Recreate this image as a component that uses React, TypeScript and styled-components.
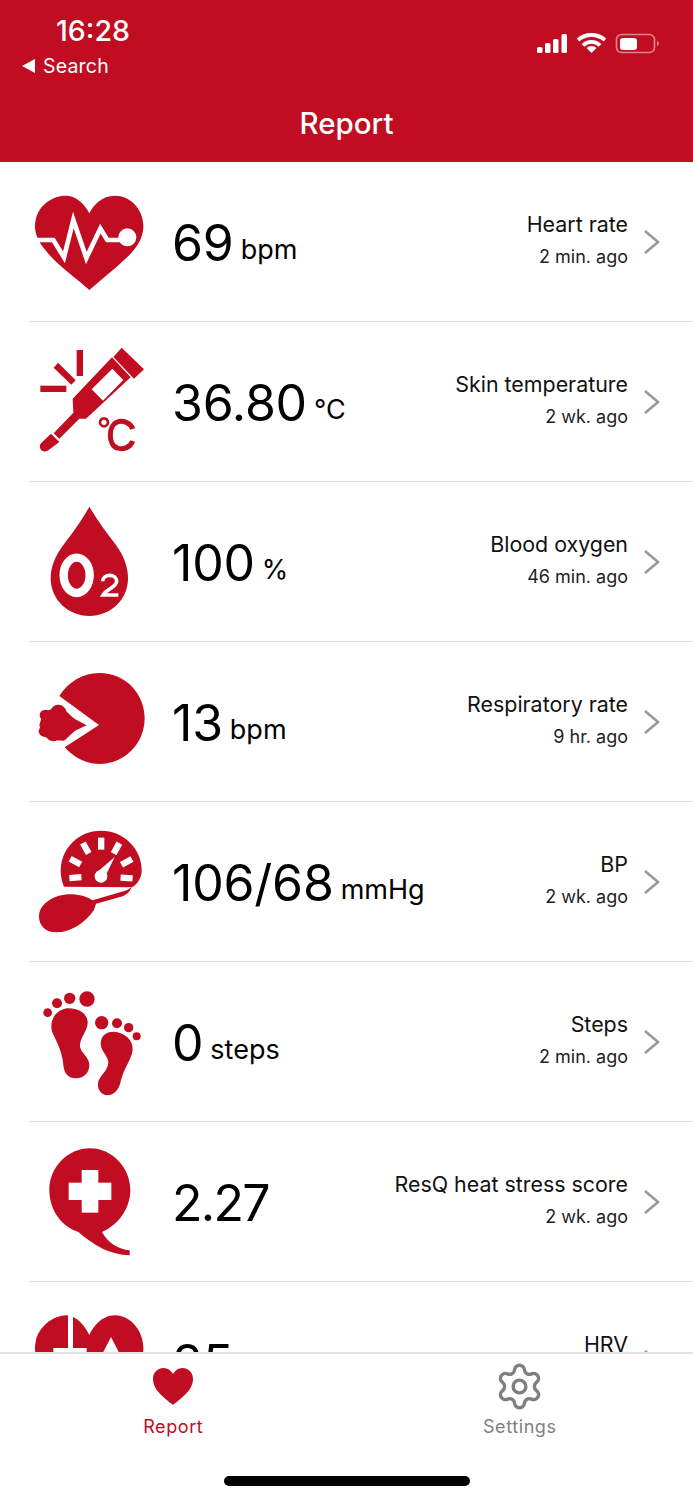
import * as React from 'react';
import styled, { createGlobalStyle } from 'styled-components';
import { Settings } from 'lucide-react';

const RED = '#C00D22';

const GlobalStyle = createGlobalStyle`
	html, body {
		margin: 0;
		padding: 0;
		background: #FFFFFF;
	}
	body {
		font-family: Inter, "Liberation Sans", sans-serif;
	}
`;

const Page = styled.div`
	width: 693px;
	height: 1500px;
	display: flex;
	flex-direction: column;
	overflow: hidden;
	background: #FFFFFF;
`;

const Header = styled.header`
	height: 162px;
	flex: none;
	box-sizing: border-box;
	padding: 15px 32px 0 22px;
	display: flex;
	flex-direction: column;
	background: ${RED};
	color: #FFFFFF;
`;

const StatusBar = styled.div`
	display: flex;
	justify-content: space-between;
	align-items: flex-start;
`;

const StatusLeft = styled.div`
	display: flex;
	flex-direction: column;
`;

const Time = styled.div`
	margin-left: 34px;
	font-size: 28.5px;
	line-height: 32px;
	font-weight: 500;
`;

const BackLink = styled.div`
	margin-top: 8px;
	display: flex;
	align-items: center;
	gap: 8px;
	font-size: 19.5px;
	line-height: 22px;
	letter-spacing: 0.2px;
`;

const StatusIcons = styled.svg`
	margin-top: 17px;
	display: block;
`;

const Title = styled.h1`
	margin: 28px 0 0 10px;
	text-align: center;
	font-size: 29.5px;
	line-height: 36px;
	font-weight: 500;
`;

const List = styled.main`
	flex: 1;
	min-height: 0;
	overflow: hidden;
`;

const Row = styled.div`
	height: 160px;
	box-sizing: border-box;
	margin-left: 29px;
	padding-right: 32px;
	display: flex;
	align-items: center;
	border-bottom: 1px solid #DDDDDD;
`;

const IconBox = styled.svg`
	flex: none;
	display: block;
	width: 120px;
	height: 130px;
	fill: ${RED};
`;

const Reading = styled.div`
	margin-left: 23px;
	padding-top: 2px;
	flex: 1;
	color: #000000;
	white-space: nowrap;
`;

const Value = styled.span<{ $tight?: boolean }>`
	font-size: 50px;
	line-height: 60px;
	letter-spacing: ${props => props.$tight ? '-1.7px' : '-0.2px'};
`;

const Unit = styled.span`
	margin-left: 7px;
	font-size: 27px;
	line-height: 32px;
	vertical-align: 2px;
`;

const Meta = styled.div`
	display: flex;
	flex-direction: column;
	align-items: flex-end;
	margin-right: 15px;
`;

const Label = styled.div`
	font-size: 21.4px;
	line-height: 30px;
	color: #111111;
`;

const Ago = styled.div`
	font-size: 18px;
	line-height: 36px;
	color: #222222;
`;

const Chevron = styled.svg`
	flex: none;
	display: block;
`;

const TabBar = styled.nav`
	height: 148px;
	flex: none;
	box-sizing: border-box;
	border-top: 2px solid #E2E2E2;
	display: flex;
	flex-direction: column;
	background: #FFFFFF;
`;

const Tabs = styled.div`
	display: flex;
`;

const Tab = styled.div<{ $active?: boolean }>`
	flex: 1;
	height: 122px;
	padding-top: 5px;
	box-sizing: border-box;
	display: flex;
	flex-direction: column;
	align-items: center;
	font-size: 18px;
	line-height: 22px;
	letter-spacing: 0.6px;
	font-weight: 400;
	color: ${props => props.$active ? RED : '#808080'};
`;

const TabIcon = styled.div`
	height: 54px;
	margin-bottom: 3px;
	display: flex;
	align-items: center;
	justify-content: center;
`;

const HomeIndicator = styled.div`
	width: 246px;
	height: 10px;
	margin: 0 auto;
	border-radius: 5px;
	background: #000000;
`;

const HeartIcon = () => (
	<IconBox viewBox="27 -9 360 390">
		<path d="M208 330 C170 295 110 255 76 210 C50 178 40 150 47 120 C55 75 100 45 140 47 C172 49 196 75 208 100 C220 75 245 47 285 47 C330 47 368 85 370 135 C372 175 345 210 318 235 C285 268 245 297 208 330 Z" />
		<path d="M48 180 H100 L132 232 L160 120 L199 234 L241 146 L262 180 H322" fill="none" stroke="#FFF" strokeWidth="14" />
		<circle cx="322" cy="172" r="27" fill="#FFF" />
	</IconBox>
);

const ThermometerIcon = () => (
	<IconBox viewBox="27 471 360 390">
		<rect x="61" y="617" width="78" height="19" />
		<rect x="170" y="510" width="19" height="78" />
		<path d="M101 563 L114 548 L167 601 L154 614 Z" />
		<path d="M276 532 L332 592 L198 716 L178 716 L118 776 L101 760 L160 698 L158 656 Z" />
		<path d="M277 566 L310 600 L249 662 L215 628 Z" fill="#FFF" />
		<path d="M305 503 L372 568 L342 596 L280 531 Z" />
		<path d="M93 761 L118 786 L83 812 C72 818 62 812 60 803 C58 795 62 790 66 787 Z" />
		<circle cx="252" cy="727" r="12" fill="none" stroke={RED} strokeWidth="8" />
		<path d="M338 747 C332 728 308 720 292 726 C264 736 264 796 292 804 C310 810 332 802 338 783" fill="none" stroke={RED} strokeWidth="15" />
	</IconBox>
);

const DropIcon = () => (
	<IconBox viewBox="27 21 360 390">
		<path d="M208 50 C185 92 160 125 130 165 C105 198 92 232 92 265 C92 330 145 378 208 378 C272 378 324 330 324 265 C324 232 312 198 288 165 C258 125 232 92 208 50 Z" />
		<ellipse cx="170" cy="256" rx="39" ry="53" fill="none" stroke="#FFF" strokeWidth="25" />
		<path d="M248 274 C248 250 290 250 290 274 C290 292 258 298 249 315 H295" fill="none" stroke="#FFF" strokeWidth="11" />
	</IconBox>
);

const BreathIcon = () => (
	<IconBox viewBox="27 501 360 390">
		<path d="M118 618 C145 575 190 549 238 549 C315 549 374 610 374 685 C374 762 312 822 238 822 C200 822 162 804 134 772 L237 705 Z" />
		<circle cx="76" cy="676" r="17" />
		<circle cx="115" cy="668" r="24" />
		<circle cx="72" cy="724" r="16" />
		<circle cx="100" cy="733" r="21" />
		<path d="M70 665 L118 650 C135 655 145 672 166 688 L200 706 L165 722 C155 730 146 740 132 752 L90 750 L66 735 L58 705 Z" />
	</IconBox>
);

// [angle, radius] of the gauge's tick marks
const gaugeTicks: [number, number][] = [
	[0, 97], [29, 95], [-29, 95], [61, 88], [-61, 88], [94, 77], [-94, 77],
];

const GaugeIcon = () => (
	<IconBox viewBox="27 6 360 390">
		<path d="M132 215 C125 198 122 182 122 167 C122 100 176 47 243 47 C310 47 365 100 365 167 C365 188 352 208 335 217 Z" />
		<path d="M335 216 C328 234 316 242 300 246 L228 266 L222 285 C195 325 150 352 110 352 C75 352 57 330 57 305 C57 265 105 238 150 238 C178 238 200 245 218 256 L300 232 C316 228 326 224 335 216 Z" />
		<g fill="#FFF">
			{gaugeTicks.map(([angle, r]) => (
				<rect key={angle} x="234" y={183 - r - 18} width="19" height="36" transform={`rotate(${angle} 243 183)`} />
			))}
			<circle cx="243" cy="184" r="19" />
			<path d="M231 172 L284 126 L255 186 Z" />
		</g>
	</IconBox>
);

const FeetIcon = () => (
	<IconBox viewBox="27 486 360 390">
		<circle cx="201" cy="552" r="23" />
		<circle cx="149" cy="550" r="17" />
		<circle cx="111" cy="565" r="15" />
		<circle cx="83" cy="593" r="13" />
		<path d="M140 580 C175 578 204 595 203 625 C202 650 178 670 180 695 C183 715 208 725 208 750 C208 775 190 790 168 790 C145 790 132 775 130 750 C128 715 110 680 98 655 C88 630 95 590 140 580 Z" />
		<circle cx="245" cy="623" r="20" />
		<circle cx="291" cy="625" r="15" />
		<circle cx="326" cy="638" r="14" />
		<circle cx="350" cy="664" r="12" />
		<path d="M280 650 C315 652 340 675 338 705 C336 730 312 760 303 795 C298 825 280 842 262 841 C245 840 232 825 234 805 C236 785 262 770 265 745 C267 725 242 710 242 685 C243 662 258 650 280 650 Z" />
	</IconBox>
);

const QIcon = () => (
	<IconBox viewBox="27 6 360 390">
		<path d="M175 291 C125 275 88 225 88 165 C88 98 142 40 210 40 C276 40 331 98 331 165 C331 220 295 270 246 291 C265 325 295 342 329 346 V361 C270 360 220 330 175 291 Z" />
		<rect x="185" y="105" width="50" height="128" fill="#FFF" />
		<rect x="146" y="143" width="128" height="52" fill="#FFF" />
	</IconBox>
);

const HrvIcon = () => (
	<IconBox viewBox="27 486 360 390">
		<path d="M208 830 C170 795 110 755 76 710 C50 678 40 650 47 620 C55 575 100 541 140 541 C172 543 196 575 208 600 C220 575 245 541 285 541 C330 541 368 585 370 635 C372 675 345 710 318 735 C285 768 245 797 208 830 Z" />
		<rect x="144" y="530" width="15" height="125" fill="#FFF" />
		<rect x="100" y="639" width="100" height="15" fill="#FFF" />
		<path d="M273 606 L240 670 H306 Z" fill="#FFF" />
	</IconBox>
);

interface IMetric {
	icon: React.ReactNode;
	value: string;
	unit?: string;
	tight?: boolean;
	label: string;
	ago: string;
}

const metrics: IMetric[] = [
	{ icon: <HeartIcon />, value: '69', unit: 'bpm', label: 'Heart rate', ago: '2 min. ago' },
	{ icon: <ThermometerIcon />, value: '36.80', unit: '°C', label: 'Skin temperature', ago: '2 wk. ago' },
	{ icon: <DropIcon />, value: '100', unit: '%', label: 'Blood oxygen', ago: '46 min. ago' },
	{ icon: <BreathIcon />, value: '13', unit: 'bpm', label: 'Respiratory rate', ago: '9 hr. ago' },
	{ icon: <GaugeIcon />, value: '106/68', unit: 'mmHg', label: 'BP', ago: '2 wk. ago' },
	{ icon: <FeetIcon />, value: '0', unit: 'steps', label: 'Steps', ago: '2 min. ago' },
	{ icon: <QIcon />, value: '2.27', tight: true, label: 'ResQ heat stress score', ago: '2 wk. ago' },
	{ icon: <HrvIcon />, value: '85', unit: 'ms', label: 'HRV', ago: '2 wk. ago' },
];

const App = () => (
	<Page>
		<GlobalStyle />
		<Header>
			<StatusBar>
				<StatusLeft>
					<Time>16:28</Time>
					<BackLink>
						<svg width="13" height="14" viewBox="0 0 13 14"><path d="M0 7 L13 0 V14 Z" fill="#FFF" /></svg>
						Search
					</BackLink>
				</StatusLeft>
				<StatusIcons width="124" height="22" viewBox="0 0 124 22">
					<g fill="#FFF">
						<rect x="0" y="15" width="5.5" height="6" rx="1.5" />
						<rect x="8" y="11" width="5.5" height="10" rx="1.5" />
						<rect x="16" y="7" width="5.5" height="14" rx="1.5" />
						<rect x="24.5" y="2" width="5.5" height="19" rx="1.5" />
						<path d="M54.5 21 L49.5 16 A7 7 0 0 1 59.5 16 Z" />
					</g>
					<g fill="none" stroke="#FFF" strokeWidth="3.8">
						<path d="M41 8 A20.7 20.7 0 0 1 68 8" />
						<path d="M46 13.5 A12 12 0 0 1 63 13.5" />
					</g>
					<rect x="79.5" y="2.5" width="38" height="18" rx="5" fill="none" stroke="#FFF" strokeOpacity="0.5" strokeWidth="1.6" />
					<rect x="83" y="6" width="17" height="12" rx="3" fill="#FFF" />
					<path d="M120 9 C122.5 10 122.5 13 120 14 Z" fill="#FFF" fillOpacity="0.5" />
				</StatusIcons>
			</StatusBar>
			<Title>Report</Title>
		</Header>
		<List>
			{metrics.map(m => (
				<Row key={m.label}>
					{m.icon}
					<Reading>
						<Value $tight={m.tight}>{m.value}</Value>
						{m.unit && <Unit>{m.unit}</Unit>}
					</Reading>
					<Meta>
						<Label>{m.label}</Label>
						<Ago>{m.ago}</Ago>
					</Meta>
					<Chevron width="18" height="26" viewBox="0 0 18 26">
						<path d="M2 2 L15 13 L2 24" fill="none" stroke="#999999" strokeWidth="2.6" />
					</Chevron>
				</Row>
			))}
		</List>
		<TabBar>
			<Tabs>
				<Tab $active>
					<TabIcon>
						<svg width="42" height="38" viewBox="0 0 42 38">
							<path d="M21 38 C14 32 1 24 1 12 C1 5 6 1 11.5 1 C15.5 1 19 3 21 7 C23 3 26.5 1 30.5 1 C36 1 41 5 41 12 C41 24 28 32 21 38 Z" fill={RED} />
						</svg>
					</TabIcon>
					Report
				</Tab>
				<Tab>
					<TabIcon>
						<Settings size={51} strokeWidth={1.6} color="#7F7F7F" />
					</TabIcon>
					Settings
				</Tab>
			</Tabs>
			<HomeIndicator />
		</TabBar>
	</Page>
);

export default App;
